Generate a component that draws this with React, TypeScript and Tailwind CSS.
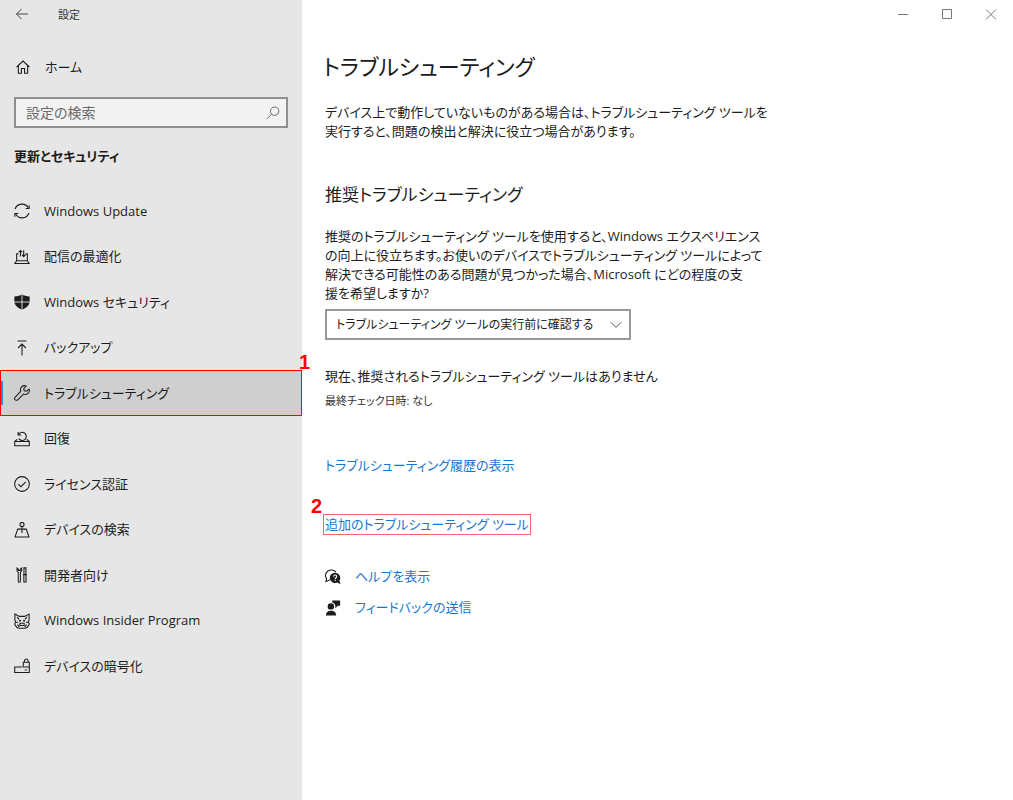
import type { ReactNode } from "react";

function Icon({ children, size = 16 }: { children: ReactNode; size?: number }) {
  return (
    <svg
      width={size}
      height={size}
      viewBox="0 0 18 18"
      fill="none"
      stroke="currentColor"
      strokeWidth="1.2"
      className="shrink-0"
      aria-hidden="true"
    >
      {children}
    </svg>
  );
}

const SyncIcon = () => (
  <Icon>
    <path d="M1.2 6.8A8.2 8.2 0 0 1 16.2 5.6M16.8 11.2A8.2 8.2 0 0 1 1.8 12.4" />
    <path d="M17 2.4V6.2H13.2M1 15.6V11.8H4.8" />
  </Icon>
);

const DeliveryIcon = () => (
  <Icon>
    <path d="M5 5.5H3V13.2M13 5.5H15V13.2M3 13.2L.8 16.4H17.2L15 13.2ZM3 13.2H15" />
    <path d="M7.3 8.4V1.6M5.2 3.8L7.3 1.6L9.2 3.8M10.9 1.4V8.4M9 6.4L10.9 8.6L13 6.4" />
  </Icon>
);

const ShieldIcon = () => (
  <Icon>
    <path
      d="M9 .4C7 2 4.2 2.8 .4 2.8V8.2C.4 12.6 4.2 15.8 9 17.8C13.8 15.8 17.6 12.6 17.6 8.2V2.8C13.8 2.8 11 2 9 .4Z"
      fill="currentColor"
      stroke="none"
    />
    <path d="M9 0V18M0 9H18" stroke="#e6e6e6" strokeWidth="1" />
  </Icon>
);

const BackupIcon = () => (
  <Icon>
    <path d="M4 1.2H14M9 17.5V4.5M4.6 9L9 4.6L13.4 9" />
  </Icon>
);

const WrenchIcon = () => (
  <Icon>
    <path d="M17 4.6L14 7L11.5 6.5L11 4L13.6 1.2C11.6 .4 9.2 1 8 2.9C7.2 4.2 7.1 5.8 7.6 7.1L1.2 13.8C.4 14.7 .5 15.9 1.2 16.6C1.9 17.4 3.4 17.4 4.2 16.6L10.7 10.2C12.4 10.9 14.6 10.5 16 9.1C17.2 7.9 17.6 6.1 17 4.6Z" />
  </Icon>
);

const RecoveryIcon = () => (
  <Icon>
    <path d="M.8 11.8H17.2V16.6H.8ZM.8 11.8L3.6 9.4M17.2 11.8L14.4 9.4" />
    <path d="M5 4.2A4.6 4.6 0 1 1 5.4 8.6M4.6 1V4.6H8.2" />
  </Icon>
);

const ActivationIcon = () => (
  <Icon>
    <circle cx="9" cy="9" r="8.3" />
    <path d="M4.8 9.2L7.8 12L13.2 6.6" />
  </Icon>
);

const FindDeviceIcon = () => (
  <Icon>
    <circle cx="9" cy="2.8" r="2.3" />
    <path d="M9 5.1V12.4M7 8H4.2L1.2 16.8H16.8L13.8 8H11" />
    <path d="M6.4 8H11.6" />
  </Icon>
);

const DeveloperIcon = () => (
  <Icon>
    <path d="M3.4 1.2V4.2L4.8 6V16A1.2 1.2 0 0 0 7.2 16V6L8.6 4.2V1.2L7 2.6V4H5V2.6Z" />
    <path d="M11.2 1H13.4V8.6H11.2ZM10 8.8H14.6M11.1 8.8V16.8H13.5V8.8" />
  </Icon>
);

const InsiderIcon = () => (
  <Icon>
    <path d="M1 1.2L6 3.8H12L17 1.2V8L16.2 10L17.2 12.4C16.2 15 14 17.2 11.6 17.2H6.4C4 17.2 1.8 15 .8 12.4L1.8 10L1 8Z" />
    <path d="M3.4 4.6L5.8 7.2M14.6 4.6L12.2 7.2M1.6 10.4H4.6M16.4 10.4H13.4M6.6 11.6H11.4V14H6.6ZM3.8 13.2L6 15.6M14.2 13.2L12 15.6" />
    <path d="M5.6 8.8H7.8M10.2 8.8H12.4" strokeWidth="1.8" />
  </Icon>
);

const EncryptionIcon = () => (
  <Icon>
    <path d="M9.2 10.2H.8V16.4H17.2V10.2M12 13.4H14.6" />
    <path d="M10.4 4.8H17.2V10.2H10.4ZM11.8 4.8V3.2A2 2 0 0 1 15.8 3.2V4.8" />
  </Icon>
);

const HomeIcon = () => (
  <Icon size={14}>
    <path d="M.8 9L9 1.4L17.2 9M3 7.2V17H7V11H11V17H15V7.2" strokeWidth="1.4" />
  </Icon>
);

const HelpIcon = () => (
  <Icon>
    <path d="M5.4 12.2L1 14.2L1.8 10.8A6.2 5.8 0 1 1 12.4 3.6" />
    <path
      d="M11.4 4.2A5.8 5.8 0 1 0 13.8 15.2L17.6 17.2L16.2 13.2A5.8 5.8 0 0 0 11.4 4.2Z"
      fill="currentColor"
      stroke="none"
    />
    <path d="M9.8 8.6A1.7 1.7 0 1 1 11.6 10.2V11.2M11.6 12.2V13.6" stroke="#ffffff" />
  </Icon>
);

const FeedbackIcon = () => (
  <Icon>
    <g fill="currentColor" stroke="none">
      <circle cx="6.6" cy="7.2" r="3.6" />
      <path d="M1 17.4C1 13.8 3.2 12 6.8 12C10.4 12 12.6 13.8 12.6 17.4Z" />
      <path d="M8.2 .6H17V6.6H14.4L11.6 9.4V6.6C11.6 4.8 10 3.2 8.2 2.8Z" />
    </g>
  </Icon>
);

const navItems: { label: string; icon: ReactNode; current?: boolean }[] = [
  { label: "Windows Update", icon: <SyncIcon /> },
  { label: "配信の最適化", icon: <DeliveryIcon /> },
  { label: "Windows セキュリティ", icon: <ShieldIcon /> },
  { label: "バックアップ", icon: <BackupIcon /> },
  { label: "トラブルシューティング", icon: <WrenchIcon />, current: true },
  { label: "回復", icon: <RecoveryIcon /> },
  { label: "ライセンス認証", icon: <ActivationIcon /> },
  { label: "デバイスの検索", icon: <FindDeviceIcon /> },
  { label: "開発者向け", icon: <DeveloperIcon /> },
  { label: "Windows Insider Program", icon: <InsiderIcon /> },
  { label: "デバイスの暗号化", icon: <EncryptionIcon /> },
];

function Marker({ children, className }: { children: ReactNode; className: string }) {
  return (
    <span
      className={`absolute font-['Liberation_Sans',sans-serif] text-[20px] leading-5 font-bold text-[#ff0000] ${className}`}
    >
      {children}
    </span>
  );
}

function Sidebar() {
  return (
    <aside className="w-[302px] shrink-0 bg-[#e6e6e6]">
      <div className="flex h-7 items-center">
        <button type="button" aria-label="戻る" className="flex h-7 w-11 items-center justify-center text-[#444]">
          <svg width="14" height="12" viewBox="0 0 14 12" fill="none" stroke="currentColor" aria-hidden="true">
            <path d="M13 6H1.5M6.5 1L1.5 6L6.5 11" />
          </svg>
        </button>
        <span className="pl-[14px] text-[11px] text-[#333]">設定</span>
      </div>

      <a href="#home" className="mt-6 flex h-[30px] items-center gap-[15px] pl-4">
        <HomeIcon />
        <span>ホーム</span>
      </a>

      <div className="mx-[14px] mt-[15px] flex h-[31px] items-center border-2 border-[#8f8f8f] bg-[#f2f2f2] pr-[6px]">
        <input
          type="search"
          aria-label="設定の検索"
          placeholder="設定の検索"
          className="min-w-0 flex-1 bg-transparent pl-[10px] text-[14px] leading-5 outline-none placeholder:text-[#6b6b6b]"
        />
        <svg width="14" height="14" viewBox="0 0 14 14" fill="none" stroke="#666" aria-hidden="true">
          <circle cx="8.6" cy="5.2" r="4.2" />
          <path d="M5.6 8.2L1 12.8" />
        </svg>
      </div>

      <h2 className="mt-[18px] pl-[14px] leading-5 font-semibold">更新とセキュリティ</h2>

      <nav className="mt-[22px]">
        <ul>
          {navItems.map((item) => (
            <li key={item.label} className="relative flex odd:h-[46px] even:h-[45px]">
              <a
                href="#section"
                aria-current={item.current ? "page" : undefined}
                className={
                  item.current
                    ? "flex flex-1 items-center border border-[#ff0000] bg-[#cfcfcf]"
                    : "flex flex-1 items-center border border-transparent"
                }
              >
                <span className={item.current ? "h-6 w-[2px] bg-[#2a8ad8]" : "h-6 w-[2px]"} />
                <span className="mr-[14px] ml-[11px]">{item.icon}</span>
                <span>{item.label}</span>
              </a>
              {item.current && <Marker className="-top-[18px] left-[299px]">1</Marker>}
            </li>
          ))}
        </ul>
      </nav>
    </aside>
  );
}

function WindowControls() {
  const button = "flex h-7 w-11 items-center justify-center text-[#777]";
  return (
    <div className="flex justify-end">
      <button type="button" aria-label="最小化" className={button}>
        <svg width="12" height="12" viewBox="0 0 12 12" fill="none" stroke="currentColor" aria-hidden="true">
          <path d="M1 6.5H11" />
        </svg>
      </button>
      <button type="button" aria-label="最大化" className={button}>
        <svg width="12" height="12" viewBox="0 0 12 12" fill="none" stroke="currentColor" aria-hidden="true">
          <path d="M1.5 1.5H10.5V10.5H1.5Z" />
        </svg>
      </button>
      <button type="button" aria-label="閉じる" className={button}>
        <svg width="12" height="12" viewBox="0 0 12 12" fill="none" stroke="currentColor" aria-hidden="true">
          <path d="M1 1.5L11 11.5M11 1.5L1 11.5" />
        </svg>
      </button>
    </div>
  );
}

export default function App() {
  return (
    <div className="flex min-h-screen bg-white font-['Open_Sans','Noto_Sans_CJK_JP',sans-serif] text-[13px] leading-[19px] text-[#1c1c1c] [font-feature-settings:'palt']">
      <Sidebar />
      <div className="min-w-0 flex-1">
        <WindowControls />
        <main className="pr-4 pl-[23px]">
          <h1 className="-ml-[2px] pt-5 text-[22px] leading-9">トラブルシューティング</h1>
          <p className="mt-[19px]">
            デバイス上で動作していないものがある場合は、トラブルシューティング ツールを
            <br />
            実行すると、問題の検出と解決に役立つ場合があります。
          </p>

          <h2 className="mt-10 text-[17px] leading-7">推奨トラブルシューティング</h2>
          <p className="mt-[18px]">
            推奨のトラブルシューティング ツールを使用すると、Windows エクスペリエンス
            <br />
            の向上に役立ちます。お使いのデバイスでトラブルシューティング ツールによって
            <br />
            解決できる可能性のある問題が見つかった場合、Microsoft にどの程度の支
            <br />
            援を希望しますか?
          </p>

          <div className="relative mt-[6px] w-[306px]">
            <select
              aria-label="推奨トラブルシューティング"
              className="block h-[31px] w-full appearance-none border-2 border-[#999] bg-white pl-[9px] text-[12px]"
            >
              <option>トラブルシューティング ツールの実行前に確認する</option>
            </select>
            <svg
              width="12"
              height="8"
              viewBox="0 0 12 8"
              fill="none"
              stroke="#555"
              className="pointer-events-none absolute top-3 right-[9px]"
              aria-hidden="true"
            >
              <path d="M.8 1.2L6 6.4L11.2 1.2" />
            </svg>
          </div>

          <p className="mt-[27px]">現在、推奨されるトラブルシューティング ツールはありません</p>
          <p className="mt-[6px] text-[11px] leading-[18px] text-[#333]">最終チェック日時: なし</p>

          <div className="mt-[46px] flex flex-col items-start text-[#1976cf]">
            <a href="#history">トラブルシューティング履歴の表示</a>
            <div className="relative mt-[39px] -ml-[2px]">
              <Marker className="-top-[18px] -left-3">2</Marker>
              <a href="#tools" className="block border border-[#f06a6a] px-px">
                追加のトラブルシューティング ツール
              </a>
            </div>
            <a href="#help" className="mt-8 flex items-center gap-[14px]">
              <span className="text-[#1c1c1c]">
                <HelpIcon />
              </span>
              ヘルプを表示
            </a>
            <a href="#feedback" className="mt-3 flex items-center gap-[14px]">
              <span className="text-[#1c1c1c]">
                <FeedbackIcon />
              </span>
              フィードバックの送信
            </a>
          </div>
        </main>
      </div>
    </div>
  );
}
